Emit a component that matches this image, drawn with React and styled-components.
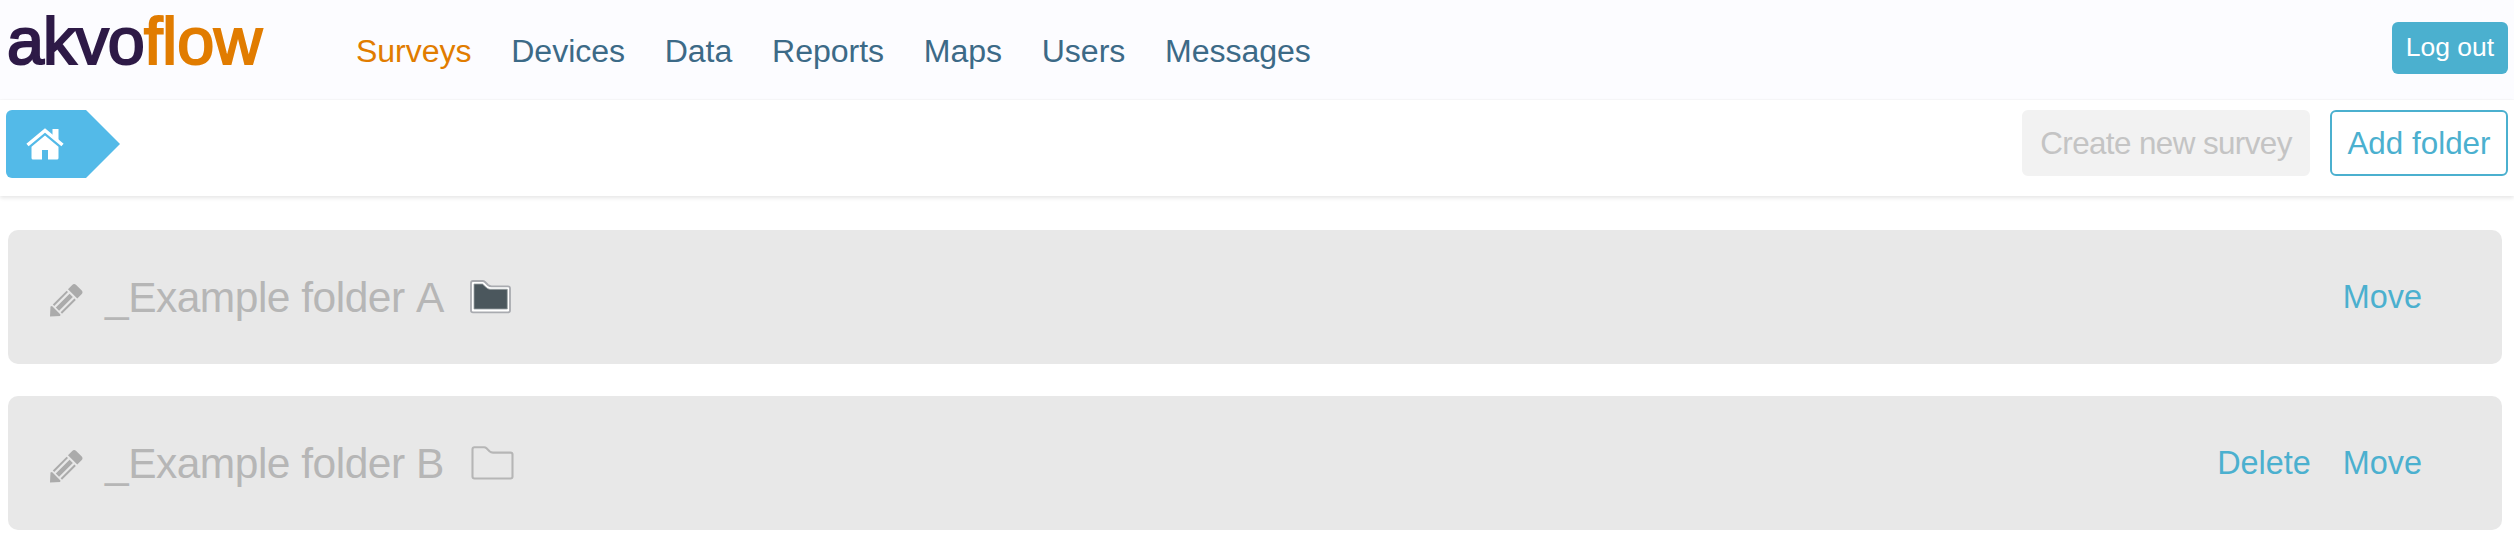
import React from "react";
import styled, { createGlobalStyle } from "styled-components";

const accent = "#4bb0cf";

const GlobalStyle = createGlobalStyle`
  *, *::before, *::after { box-sizing: border-box; }
  body {
    margin: 0;
    background: #fff;
    font-family: "Liberation Sans", Helvetica, Arial, sans-serif;
    font-kerning: none;
  }
  button { font-family: inherit; cursor: pointer; }
`;

const Header = styled.header`
  display: flex;
  align-items: flex-start;
  height: 100px;
  padding: 0 6px 0 7px;
  background: #fcfcff;
  border-bottom: 1px solid #f8f8fa;
`;

const Logo = styled.h1`
  width: 349px;
  margin: 0;
  padding-top: 3px;
  font-size: 66.5px;
  line-height: 77px;
  font-weight: 400;
  letter-spacing: -0.9px;
  white-space: nowrap;
  color: #2e1a47;
  -webkit-text-stroke: 2.2px currentColor;
  span {
    color: #e17c00;
    letter-spacing: 0;
  }
`;

const Nav = styled.nav`
  display: flex;
  flex: 1;
  gap: 39.8px;
  padding-top: 33px;
`;

const NavLink = styled.a`
  font-size: 32.1px;
  line-height: 36px;
  letter-spacing: -0.06px;
  color: ${(p) => (p.$active ? "#e17c00" : "#3c6a87")};
`;

const LogOut = styled.button`
  width: 116px;
  height: 52px;
  margin-top: 22px;
  padding: 0 0 2px;
  border: 0;
  border-radius: 6px;
  background: ${accent};
  color: #fff;
  font-size: 26.5px;
  white-space: nowrap;
`;

const Toolbar = styled.div`
  display: flex;
  align-items: flex-start;
  justify-content: space-between;
  height: 96px;
  padding: 10px 6px 0;
  box-shadow: 0 2px 4px rgba(0, 0, 0, 0.1);
`;

const HomeCrumb = styled.a`
  display: flex;
  align-items: center;
  width: 114px;
  height: 68px;
  padding-left: 20px;
  border-radius: 6px 0 0 6px;
  background: #53bae8;
  clip-path: polygon(0 0, 80px 0, 100% 50%, 80px 100%, 0 100%);
`;

const Actions = styled.div`
  display: flex;
  gap: 20px;
`;

const ActionButton = styled.button`
  width: ${(p) => p.$width}px;
  height: 66px;
  padding: 2px 0 0;
  border: 2px solid ${(p) => (p.disabled ? "#f2f2f2" : accent)};
  border-radius: 6px;
  background: ${(p) => (p.disabled ? "#f2f2f2" : "#fff")};
  color: ${(p) => (p.disabled ? "#c4c4c4" : accent)};
  font-size: 31.4px;
  letter-spacing: ${(p) => p.$tracking || 0}px;
  white-space: nowrap;
`;

const FolderList = styled.ul`
  display: flex;
  flex-direction: column;
  gap: 32px;
  margin: 0;
  padding: 34px 12px 26px 8px;
  list-style: none;
`;

const FolderRow = styled.li`
  display: flex;
  align-items: center;
  height: 134px;
  padding: 0 80px 0 42px;
  border-radius: 10px;
  background: #e8e8e8;
`;

const FolderName = styled.h2`
  width: 365px;
  margin: 2px 0 0 21px;
  font-size: 42.5px;
  line-height: 50px;
  font-weight: 400;
  letter-spacing: -0.5px;
  white-space: nowrap;
  color: #b6b6b6;
`;

const RowActions = styled.div`
  display: flex;
  gap: 32px;
  margin-left: auto;
`;

const RowAction = styled.a`
  font-size: 32.4px;
  line-height: 36px;
  color: ${accent};
`;

const Icon = styled.svg`
  display: block;
  flex: none;
  margin-top: ${(p) => p.$drop || 0}px;
`;

const PencilIcon = () => (
  <Icon $drop={5} width="34" height="34" viewBox="0 0 34 34">
    <g fill="#ababab" transform="translate(0 33.500) rotate(-45)">
      <path d="M0 0 L7.500 -6.800 L8.800 -6 V6 L7.500 6.800 Z" />
      <rect x="10.500" y="-6.500" width="19.500" height="2" />
      <rect x="10.500" y="-2.300" width="19.500" height="4.600" />
      <rect x="10.500" y="4.500" width="19.500" height="2" />
      <path d="M32 -6.600 H38 Q40.800 -6.600 40.800 -3.800 V3.800 Q40.800 6.600 38 6.600 H32 Z" />
    </g>
  </Icon>
);

const HomeIcon = () => (
  <Icon width="38" height="33" viewBox="0 0 38 33">
    <path d="M1.500 17 L19 2.500 L36.500 17" fill="none" stroke="#fff" strokeWidth="3.500" />
    <path d="M26.500 1 H32.500 V13 L26.500 8 Z" fill="#fff" />
    <path d="M19 7.500 L32.500 18.700 V30 Q32.500 31.500 31 31.500 H22 V22 H16 V31.500 H7 Q5.500 31.500 5.500 30 V18.700 Z" fill="#fff" />
  </Icon>
);

const FilledFolderIcon = () => (
  <Icon width="42" height="34" viewBox="0 0 42 34">
    <path d="M3 1 H12.500 Q14 1 15 2 L18 5 Q19.500 6.300 21.500 6.300 H38 Q40 6.300 40 8.300 V30.500 Q40 32.300 38 32.300 H3 Q1 32.300 1 30.500 V3 Q1 1 3 1 Z" fill="#fff" stroke="#a9abb0" strokeWidth="1.800" />
    <path d="M4 4 H12.500 L16 7.300 Q18 9.300 20 9.300 H37.300 V29 H4 Z" fill="#4b575d" stroke="#9ba1a5" strokeWidth=".8" />
  </Icon>
);

const OutlineFolderIcon = () => (
  <Icon $drop={-1} width="44" height="34" viewBox="0 0 44 34">
    <path d="M4.500 1.200 H14 Q15.500 1.200 16.500 2.200 L19.500 5.200 Q21 6.600 23 6.600 H40.500 Q42.500 6.600 42.500 8.600 V30.500 Q42.500 32.500 40.500 32.500 H4.500 Q2.500 32.500 2.500 30.500 V3.200 Q2.500 1.200 4.500 1.200 Z" fill="none" stroke="#b6b6b6" strokeWidth="2.100" />
  </Icon>
);

const tabs = ["Surveys", "Devices", "Data", "Reports", "Maps", "Users", "Messages"];

const folders = [
  { name: "_Example folder A", FolderIcon: FilledFolderIcon, actions: ["Move"] },
  { name: "_Example folder B", FolderIcon: OutlineFolderIcon, actions: ["Delete", "Move"] },
];

export default function App() {
  return (
    <>
      <GlobalStyle />
      <Header>
        <Logo>akvo<span>flow</span></Logo>
        <Nav>
          {tabs.map((tab) => (
            <NavLink key={tab} $active={tab === "Surveys"}>{tab}</NavLink>
          ))}
        </Nav>
        <LogOut>Log out</LogOut>
      </Header>
      <Toolbar>
        <HomeCrumb><HomeIcon /></HomeCrumb>
        <Actions>
          <ActionButton $width={288} $tracking={-0.6} disabled>Create new survey</ActionButton>
          <ActionButton $width={178}>Add folder</ActionButton>
        </Actions>
      </Toolbar>
      <FolderList>
        {folders.map(({ name, FolderIcon, actions }) => (
          <FolderRow key={name}>
            <PencilIcon />
            <FolderName>{name}</FolderName>
            <FolderIcon />
            <RowActions>
              {actions.map((action) => <RowAction key={action}>{action}</RowAction>)}
            </RowActions>
          </FolderRow>
        ))}
      </FolderList>
    </>
  );
}
